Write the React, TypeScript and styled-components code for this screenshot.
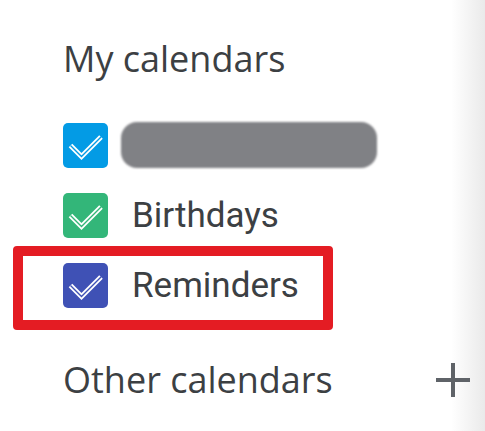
import styled, { createGlobalStyle } from 'styled-components'

const GlobalStyle = createGlobalStyle`
    html, body {
        margin: 0;
        padding: 0;
        background: #ffffff;
    }
`

const Page = styled.div`
    width: 485px;
    height: 431px;
    box-sizing: border-box;
    padding: 34px 15px 0 63px;
    overflow: hidden;
    background: linear-gradient(
        to right,
        #ffffff 0,
        #ffffff calc(100% - 34px),
        #eaeaea 100%
    );
`

const SectionHeader = styled.div<{ $spaced?: boolean }>`
    display: flex;
    align-items: center;
    justify-content: space-between;
    margin-top: ${({ $spaced }) => ($spaced ? '35px' : '0')};
`

const Title = styled.h2`
    margin: 0;
    font-family: 'Open Sans', sans-serif;
    font-weight: 400;
    font-size: 36px;
    line-height: normal;
    color: #3c4043;
`

const List = styled.div`
    display: flex;
    flex-direction: column;
    margin-top: 27px;
`

const Row = styled.div<{ $highlighted?: boolean }>`
    position: relative;
    display: flex;
    align-items: center;
    height: 70px;
    gap: 24px;

    &::before {
        content: '';
        display: ${({ $highlighted }) => ($highlighted ? 'block' : 'none')};
        position: absolute;
        left: -50px;
        top: -4px;
        width: 300px;
        height: 64px;
        border: 10px solid #e41c23;
        border-radius: 4px;
    }
`

const Label = styled.span`
    font-family: Roboto, 'Liberation Sans', sans-serif;
    font-size: 35px;
    color: #3c4043;
`

const Redacted = styled.div`
    width: 256px;
    height: 46px;
    margin-left: -11px;
    border-radius: 16px;
    background: #808185;
    filter: blur(0.8px);
`

const Checkbox = ({ color }: { color: string }) => (
    <svg width="45" height="45" viewBox="0 0 45 45">
        <rect x="0" y="0" width="45" height="45" rx="5" fill={color} />
        <path
            d="M7.5 22.5 L18.5 33.5 L38 14"
            fill="none"
            stroke="#ffffff"
            strokeWidth="5"
        />
        <path
            d="M7.5 22.5 L18.5 33.5 L38 14"
            fill="none"
            stroke={color}
            strokeWidth="1.4"
        />
    </svg>
)

const AddButton = styled.button`
    display: flex;
    padding: 0;
    border: none;
    background: none;
    cursor: pointer;
`

const PlusIcon = () => (
    <svg width="34" height="34" viewBox="0 0 34 34">
        <rect x="0" y="15" width="34" height="4" fill="#5f6368" />
        <rect x="15" y="0" width="4" height="34" fill="#5f6368" />
    </svg>
)

const calendars = [
    { color: '#039be5', name: '' },
    { color: '#33b679', name: 'Birthdays' },
    { color: '#3f51b5', name: 'Reminders', highlighted: true },
]

export default function App() {
    return (
        <>
            <GlobalStyle />
            <Page>
                <SectionHeader>
                    <Title>My calendars</Title>
                </SectionHeader>
                <List>
                    {calendars.map((cal, i) => (
                        <Row key={i} $highlighted={cal.highlighted}>
                            <Checkbox color={cal.color} />
                            {cal.name ? <Label>{cal.name}</Label> : <Redacted />}
                        </Row>
                    ))}
                </List>
                <SectionHeader $spaced>
                    <Title>Other calendars</Title>
                    <AddButton aria-label="Add other calendars">
                        <PlusIcon />
                    </AddButton>
                </SectionHeader>
            </Page>
        </>
    )
}
